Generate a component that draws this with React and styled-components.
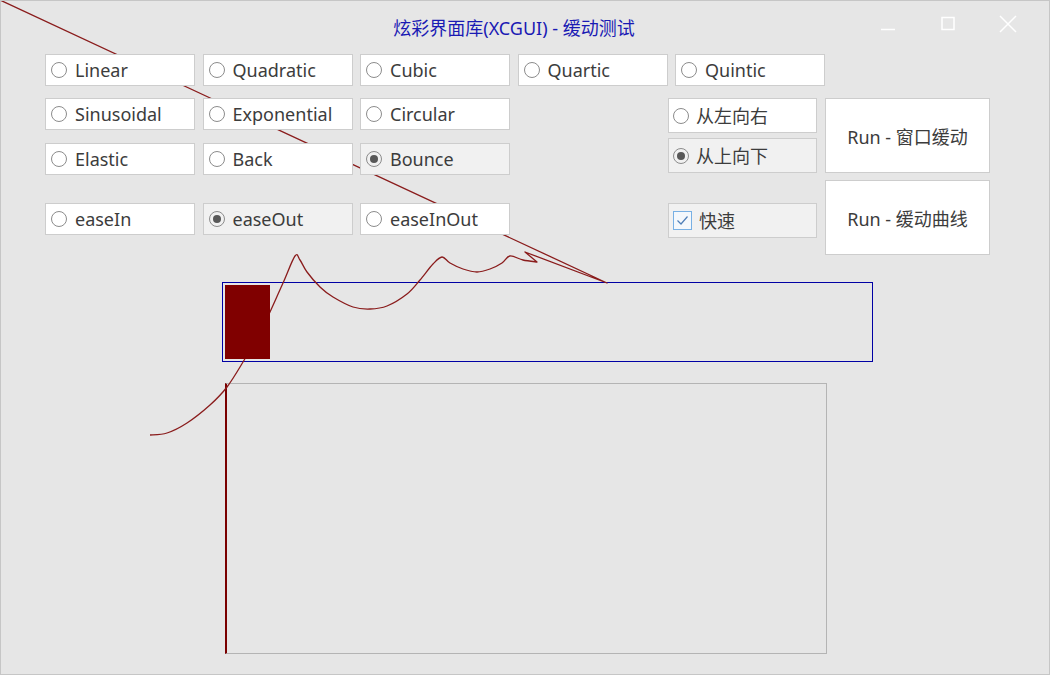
import React from "react";
import styled, { createGlobalStyle } from "styled-components";

const Global = createGlobalStyle`
  html, body { margin: 0; padding: 0; background: #e6e6e6; }
  * { box-sizing: border-box; }
`;

const Window = styled.div`
  position: relative;
  width: 1050px;
  height: 675px;
  border: 1px solid #c6c6c6;
  background: #e6e6e6;
  font-family: "Noto Sans", "Noto Sans CJK SC", sans-serif;
  color: #3c3c3c;
  overflow: hidden;
`;

const TitleBar = styled.div`
  display: flex;
  height: 53px;
  align-items: flex-start;
`;

const TitleSpacer = styled.div`
  width: 169px;
  flex: none;
`;

const Title = styled.div`
  flex: 1;
  text-align: center;
  font-size: 18px;
  line-height: 24px;
  padding-top: 15px;
  color: #1a1ab4;
  white-space: nowrap;
`;

const Controls = styled.div`
  display: flex;
  width: 191px;
  flex: none;
  padding-right: 11px;
`;

const CtlButton = styled.div`
  width: 60px;
  height: 46px;
  display: flex;
  align-items: center;
  justify-content: center;
`;

const Body = styled.div`
  padding-left: 44px;
  display: flex;
  flex-direction: column;
`;

const Row = styled.div`
  display: flex;
  gap: 7.5px;
`;

const Lower = styled.div`
  display: flex;
  margin-top: 12px;
`;

const LeftGrid = styled.div`
  display: flex;
  flex-direction: column;
  gap: 13px;
`;

const EaseRow = styled(Row)`
  margin-top: 15px;
`;

const RightPanel = styled.div`
  display: flex;
  gap: 8px;
  margin-left: 158px;
`;

const RadioCol = styled.div`
  display: flex;
  flex-direction: column;
  gap: 5px;
  width: 149px;
`;

const RunCol = styled.div`
  display: flex;
  flex-direction: column;
  gap: 7px;
  width: 165px;
`;

const OptionBox = styled.div`
  position: relative;
  z-index: 1;
  display: flex;
  align-items: center;
  gap: ${(p) => p.$gap || 8}px;
  width: ${(p) => (p.$full ? "100%" : "150px")};
  height: ${(p) => p.$h || 32}px;
  margin-top: ${(p) => p.$mt || 0}px;
  padding-left: ${(p) => p.$pl || 5}px;
  border: 1px solid #cdcdcd;
  background: ${(p) => (p.$active ? "#f1f1f1" : "#ffffff")};
  font-size: 18px;
  line-height: 1;
  white-space: nowrap;
`;

const Circle = styled.span`
  position: relative;
  flex: none;
  width: 16px;
  height: 16px;
  border-radius: 50%;
  border: 1px solid #8c8c8c;
  display: flex;
  align-items: center;
  justify-content: center;
`;

const Dot = styled.span`
  width: 8px;
  height: 8px;
  border-radius: 50%;
  background: #585858;
`;

const CheckSquare = styled.span`
  flex: none;
  width: 19px;
  height: 19px;
  border: 1px solid #78b0e4;
  background: #f4f8fc;
  display: flex;
  align-items: center;
  justify-content: center;
`;

const Label = styled.span`
  padding: 0;
`;

const RunButton = styled.div`
  position: relative;
  z-index: 1;
  height: 75px;
  border: 1px solid #cdcdcd;
  background: #ffffff;
  display: flex;
  align-items: center;
  justify-content: center;
  font-size: 18px;
`;

const Frame = styled.div`
  margin-top: 27px;
  margin-left: 177px;
  width: 651px;
  height: 80px;
  border: 1px solid #0000a4;
  padding: 2px;
`;

const Block = styled.div`
  position: relative;
  z-index: 1;
  width: 45px;
  height: 74px;
  background: #800000;
`;

const Graph = styled.div`
  margin-top: 21px;
  margin-left: 180px;
  width: 602px;
  height: 271px;
  border: 1px solid #b4b4b4;
  border-left: 2px solid #7a0000;
`;

const Overlay = styled.svg`
  position: absolute;
  left: -1px;
  top: -1px;
  pointer-events: none;
`;

function Option({ label, active, h, mt, pl, gap, full }) {
  return (
    <OptionBox $active={active} $h={h} $mt={mt} $pl={pl} $gap={gap} $full={full}>
      <Circle>{active && <Dot />}</Circle>
      <Label>{label}</Label>
    </OptionBox>
  );
}

const smoothPoints = [
  [150, 435], [167, 433], [187, 423], [210, 405], [227, 387], [243, 362],
  [257, 337], [270, 312], [283, 283], [295, 256], [300, 260], [307, 272],
  [320, 287], [333, 297], [353, 307], [370, 309], [387, 306], [407, 294],
  [420, 280], [433, 264], [442, 257], [450, 263], [463, 269], [477, 272],
  [490, 269], [502, 263], [510, 256], [523, 260], [537, 262],
];

function buildPath(pts) {
  let d = `M${pts[0][0]},${pts[0][1]}`;
  for (let i = 0; i < pts.length - 1; i++) {
    const p0 = pts[i - 1] || pts[i];
    const p1 = pts[i];
    const p2 = pts[i + 1];
    const p3 = pts[i + 2] || p2;
    const c1x = p1[0] + (p2[0] - p0[0]) / 6;
    const c1y = p1[1] + (p2[1] - p0[1]) / 6;
    const c2x = p2[0] - (p3[0] - p1[0]) / 6;
    const c2y = p2[1] - (p3[1] - p1[1]) / 6;
    d += ` C${c1x.toFixed(1)},${c1y.toFixed(1)} ${c2x.toFixed(1)},${c2y.toFixed(1)} ${p2[0]},${p2[1]}`;
  }
  d += " L525,252 L607,283 L0,0";
  return d;
}

export default function App() {
  const d = buildPath(smoothPoints);
  return (
    <>
      <Global />
      <Window>
        <Overlay width="1050" height="675" viewBox="0 0 1050 675">
          <path d={d} fill="none" stroke="#8a1c1c" strokeWidth="1.3" strokeLinejoin="round" />
        </Overlay>
        <TitleBar>
          <TitleSpacer />
          <Title>炫彩界面库(XCGUI) - 缓动测试</Title>
          <Controls>
            <CtlButton>
              <svg width="16" height="16" viewBox="0 0 16 16">
                <line x1="1" y1="13.5" x2="15" y2="13.5" stroke="#fff" strokeWidth="1.5" />
              </svg>
            </CtlButton>
            <CtlButton>
              <svg width="16" height="16" viewBox="0 0 16 16">
                <rect x="2" y="1.5" width="12" height="12" fill="none" stroke="#fff" strokeWidth="1.5" />
              </svg>
            </CtlButton>
            <CtlButton>
              <svg width="18" height="18" viewBox="0 0 18 18">
                <path d="M1 1 L17 17 M17 1 L1 17" stroke="#fff" strokeWidth="1.5" />
              </svg>
            </CtlButton>
          </Controls>
        </TitleBar>
        <Body>
          <Row>
            <Option label="Linear" />
            <Option label="Quadratic" />
            <Option label="Cubic" />
            <Option label="Quartic" />
            <Option label="Quintic" />
          </Row>
          <Lower>
            <LeftGrid>
              <Row>
                <Option label="Sinusoidal" />
                <Option label="Exponential" />
                <Option label="Circular" />
              </Row>
              <Row>
                <Option label="Elastic" />
                <Option label="Back" />
                <Option label="Bounce" active />
              </Row>
              <EaseRow>
                <Option label="easeIn" />
                <Option label="easeOut" active />
                <Option label="easeInOut" />
              </EaseRow>
            </LeftGrid>
            <RightPanel>
              <RadioCol>
                <Option label="从左向右" h={35} pl={4} gap={7} full />
                <Option label="从上向下" h={35} pl={4} gap={7} active full />
                <OptionBox $h={35} $mt={25} $pl={4} $gap={7} $active $full>
                  <CheckSquare>
                    <svg width="13" height="13" viewBox="0 0 13 13">
                      <polyline points="1.5,6.5 5,10 11.5,2.5" fill="none" stroke="#4f7fb8" strokeWidth="1.2" />
                    </svg>
                  </CheckSquare>
                  <Label>快速</Label>
                </OptionBox>
              </RadioCol>
              <RunCol>
                <RunButton>Run - 窗口缓动</RunButton>
                <RunButton>Run - 缓动曲线</RunButton>
              </RunCol>
            </RightPanel>
          </Lower>
          <Frame>
            <Block />
          </Frame>
          <Graph />
        </Body>
      </Window>
    </>
  );
}
